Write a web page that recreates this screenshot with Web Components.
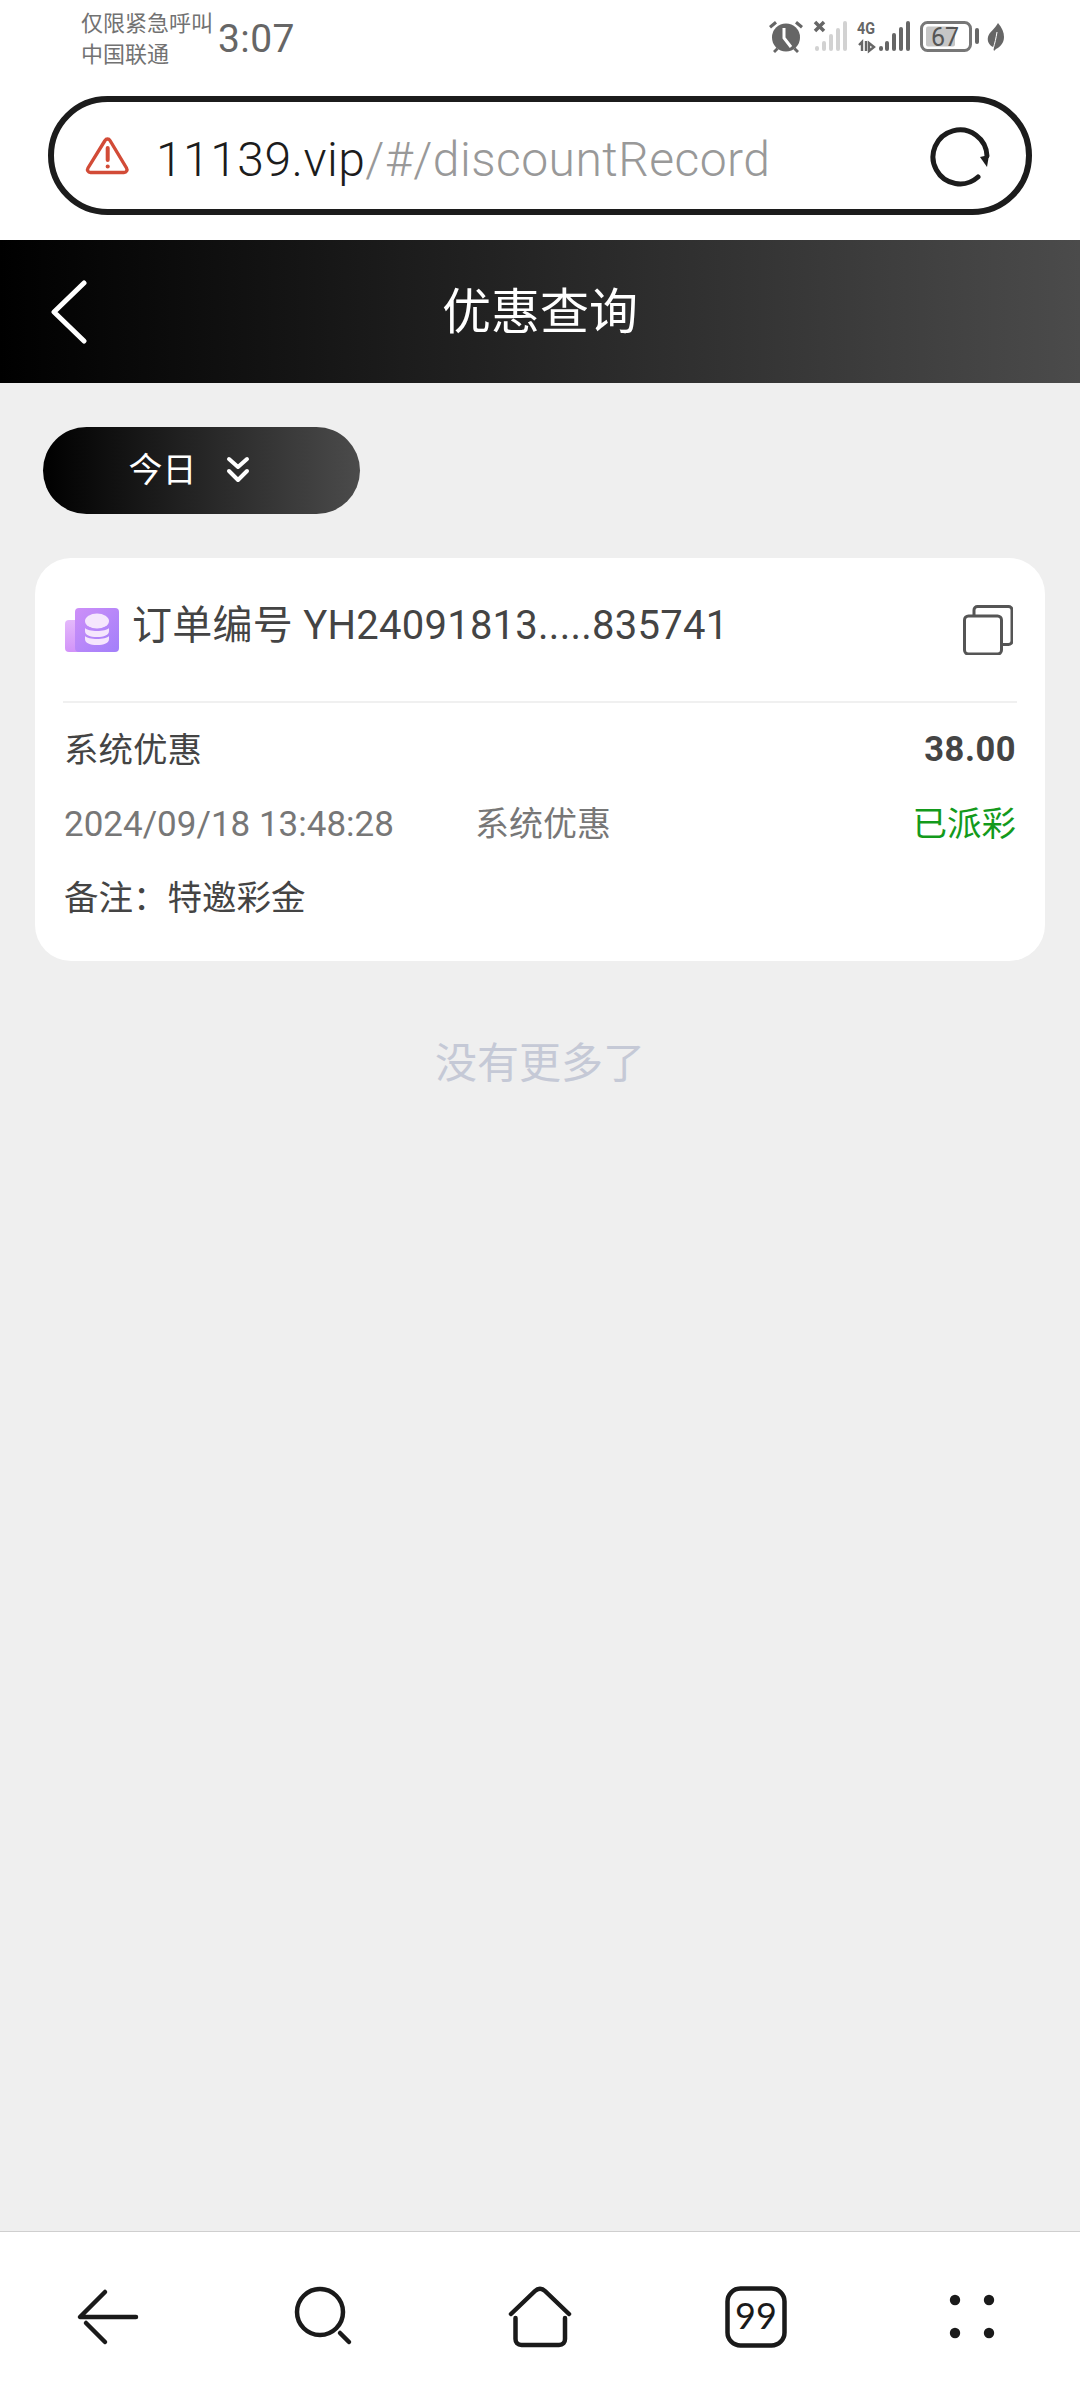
<!DOCTYPE html>
<html lang="zh-CN">
<head>
<meta charset="utf-8">
<title>优惠查询</title>
<style>
  html, body { margin: 0; padding: 0; }
  body {
    width: 1080px;
    height: 2400px;
    overflow: hidden;
    font-family: Roboto, "Noto Sans CJK SC", sans-serif;
    display: flex;
    flex-direction: column;
    background: #efefef;
  }
  main-area { flex: 1; }
</style>
</head>
<body>
<status-bar></status-bar>
<url-bar host="11139.vip" path="/#/discountRecord"></url-bar>
<page-header>优惠查询</page-header>
<main-area>
  <filter-pill>今日</filter-pill>
  <record-card order="订单编号 YH24091813.....835741" kind="系统优惠" amount="38.00"
    time="2024/09/18 13:48:28" type="系统优惠" state="已派彩" note="备注:特邀彩金"></record-card>
  <end-note>没有更多了</end-note>
</main-area>
<bottom-nav></bottom-nav>

<script>
const CJK = 'Roboto, "Noto Sans CJK SC", sans-serif';

class StatusBar extends HTMLElement {
	constructor() {
		super();
		this.attachShadow({ mode: 'open' });
		this.shadowRoot.innerHTML = `
      <style>
        :host {
          display: flex;
          align-items: center;
          height: 78px;
          padding: 0 72px 0 81px;
          background: #fff;
          color: #6b6b6b;
          font-family: ${CJK};
        }
        .carrier {
          font-size: 22px;
          line-height: 31px;
          width: 137px;
          color: #727272;
          white-space: nowrap;
        }
        .time { font-size: 39px; letter-spacing: .4px; color: #666; }
        .icons { margin-left: auto; display: flex; }
        svg { display: block; }
      </style>
      <div class="carrier">仅限紧急呼叫<br>中国联通</div>
      <div class="time">3:07</div>
      <div class="icons">
        <svg width="244" height="40" viewBox="0 0 244 40">
          <g fill="#666">
            <circle cx="22" cy="18.500" r="14"/>
            <path d="M5 7l6-5 2 2.500-6 5zM39 7l-6-5-2 2.500 6 5z"/>
            <path d="M9 32l3.500-3.500 2 2-3.500 3.500zM35 32l-3.500-3.500-2 2 3.500 3.500z"/>
          </g>
          <path d="M20 9v10l7 9" fill="none" stroke="#fff" stroke-width="3"/>
          <path d="M51 3l9 9M60 3l-9 9" stroke="#666" stroke-width="3.500"/>
          <g fill="#d2d2d2">
            <rect x="51" y="27" width="4" height="5" rx="2"/>
            <rect x="58" y="22" width="4" height="10" rx="2"/>
            <rect x="65" y="15" width="4" height="17" rx="2"/>
            <rect x="72" y="9" width="4" height="23" rx="2"/>
            <rect x="79" y="2" width="4" height="30" rx="2"/>
          </g>
          <text x="93" y="15" font-family="Roboto" font-weight="700" font-size="17" textLength="18" lengthAdjust="spacingAndGlyphs" fill="#666">4G</text>
          <path d="M98 32V23l-3 3M102 22v10M105 24v8l5-4z" fill="none" stroke="#666" stroke-width="2.400"/>
          <g fill="#666">
            <rect x="115" y="27" width="4" height="5" rx="2"/>
            <rect x="121" y="22" width="4" height="10" rx="2"/>
            <rect x="128" y="14" width="4" height="18" rx="2"/>
            <rect x="135" y="8" width="4" height="24" rx="2"/>
            <rect x="142" y="2" width="4" height="30" rx="2"/>
          </g>
          <rect x="157.500" y="3.500" width="49" height="28" rx="6" fill="#fff" stroke="#777" stroke-width="3"/>
          <rect x="162" y="7.500" width="29" height="20" rx="2" fill="#c6c6c6"/>
          <text x="181" y="27" text-anchor="middle" font-family="Roboto" font-size="25" fill="#555">67</text>
          <rect x="211" y="9" width="4" height="16" rx="2" fill="#666"/>
          <path d="M234 4c4 5 6 9 6 14 0 6-4 10-8 12l-2 2-1-4c-4-2-6-6-5-10 1-5 7-8 10-14z" fill="#666"/>
          <path d="M233 13c-1 6-2 11-4 17" fill="none" stroke="#fff" stroke-width="1"/>
        </svg>
      </div>
    `;
	}
}

class UrlBar extends HTMLElement {
	constructor() {
		super();
		this.attachShadow({ mode: 'open' });
		this.shadowRoot.innerHTML = `
      <style>
        :host {
          display: block;
          background: #fff;
          padding: 18px 48px 25px;
          font-family: ${CJK};
        }
        .box {
          box-sizing: border-box;
          height: 119px;
          border: 6px solid #1c1c1c;
          border-radius: 60px;
          display: flex;
          align-items: center;
          padding: 0 34px 0 31px;
        }
        .warn { margin-right: 25px; display: block; }
        .addr {
          font-size: 48px;
          font-weight: 300;
          letter-spacing: .47px;
          padding-top: 8px;
          color: #999;
        }
        .addr b { font-weight: 300; color: #1c1c1c; }
        .reload { margin-left: auto; display: block; }
      </style>
      <div class="box">
        <svg class="warn" width="46" height="42" viewBox="0 0 46 42" fill="none" stroke="#d24b37" stroke-width="3.400" stroke-linejoin="round">
          <path d="M20 5.500c1.200-2 3.800-2 5 0L41.500 33c1.200 2 0 4.500-2.500 4.500H5.500c-2.500 0-3.700-2.500-2.500-4.500z"/>
          <path d="M22.700 13v12" stroke-linecap="round" stroke-width="4"/>
          <circle cx="22.700" cy="31.500" r="1.400" fill="#d24b37" stroke-width="1.400"/>
        </svg>
        <div class="addr"><b>${this.getAttribute('host')}</b>${this.getAttribute('path')}</div>
        <svg class="reload" width="64" height="64" viewBox="0 0 64 64" fill="none">
          <path d="M50 53A27 27 0 1 1 59 32" stroke="#1c1c1c" stroke-width="5" stroke-linecap="round"/>
          <path d="M52 33l9-2-2 12z" fill="#1c1c1c"/>
        </svg>
      </div>
    `;
	}
}

class PageHeader extends HTMLElement {
	constructor() {
		super();
		this.attachShadow({ mode: 'open' });
		this.shadowRoot.innerHTML = `
      <style>
        :host {
          display: flex;
          align-items: center;
          justify-content: center;
          position: relative;
          box-sizing: border-box;
          height: 143px;
          padding-bottom: 8px;
          background: linear-gradient(90deg, #000 0%, #4b4b4b 100%);
          color: #fff;
          font-family: ${CJK};
          font-size: 49px;
        }
        svg { position: absolute; left: 50px; top: 40px; }
      </style>
      <svg width="38" height="64" viewBox="0 0 38 64" fill="none" stroke="#fff" stroke-width="5" stroke-linecap="round" stroke-linejoin="round">
        <path d="M34 3L4 32l30 29"/>
      </svg>
      <slot></slot>
    `;
	}
}

class FilterPill extends HTMLElement {
	constructor() {
		super();
		this.attachShadow({ mode: 'open' });
		this.shadowRoot.innerHTML = `
      <style>
        :host {
          display: flex;
          align-items: center;
          justify-content: center;
          gap: 29px;
          box-sizing: border-box;
          width: 317px;
          height: 87px;
          margin: 44px 0 0 43px;
          padding: 0 25px 6px 0;
          border-radius: 44px;
          background: linear-gradient(90deg, #000 0%, #4b4b4b 100%);
          color: #fff;
          font-family: ${CJK};
          font-size: 34px;
        }
        svg { display: block; margin-top: 5px; }
      </style>
      <slot></slot>
      <svg width="24" height="28" viewBox="0 0 24 28" fill="none" stroke="#fff" stroke-width="4" stroke-linecap="round" stroke-linejoin="round">
        <path d="M3 3l9 8 9-8M3 15l9 9 9-9"/>
      </svg>
    `;
	}
}

class RecordCard extends HTMLElement {
	constructor() {
		super();
		this.attachShadow({ mode: 'open' });
		const a = (n) => this.getAttribute(n);
		this.shadowRoot.innerHTML = `
      <style>
        :host {
          display: block;
          box-sizing: border-box;
          height: 403px;
          margin: 44px 35px 0;
          padding: 0 28px;
          border-radius: 36px;
          background: #fff;
          color: #444;
          font-family: ${CJK};
        }
        .top {
          display: flex;
          align-items: center;
          box-sizing: border-box;
          height: 145px;
          margin-bottom: 6px;
          border-bottom: 2px solid #f0f0f0;
        }
        .logo { display: block; margin: 0 12px 0 1px; }
        .order { font-size: 40px; letter-spacing: .25px; margin-top: -16px; }
        .copy { margin-left: auto; display: block; margin-right: 4px; }
        .row {
          display: flex;
          align-items: center;
          height: 74px;
          padding-left: 1px;
          font-size: 34.500px;
        }
        .row.first { height: 75px; }
        .amount { margin: 0 1px 0 auto; padding-top: 5px; font-weight: 700; letter-spacing: .5px; }
        .time { color: #777; width: 411px; padding-top: 6px; font-size: 35px; }
        .type { color: #777; font-size: 34px; }
        .state { margin: 0 1px 0 auto; color: #139a1c; }
      </style>
      <div class="top">
        <svg class="logo" width="56" height="46" viewBox="0 0 56 46">
          <defs>
            <linearGradient id="lg" x1="0" y1="0" x2="0" y2="1">
              <stop offset="0" stop-color="#e4b9fb"/><stop offset="1" stop-color="#d293f9"/>
            </linearGradient>
            <linearGradient id="fg" x1="0" y1="0" x2="1" y2="1">
              <stop offset="0" stop-color="#cd8ff8"/><stop offset="1" stop-color="#a27ffa"/>
            </linearGradient>
          </defs>
          <rect x="1" y="13" width="20" height="32" rx="4" fill="url(#lg)"/>
          <rect x="11" y="1" width="44" height="44" rx="4" fill="url(#fg)"/>
          <ellipse cx="33" cy="14" rx="12" ry="7.500" fill="#f5e6fd"/>
          <path d="M21 21c3 4 21 4 24 0v3c0 4-5 6-12 6s-12-2-12-6z" fill="#f5e6fd"/>
          <path d="M21 29c3 4 21 4 24 0v3c0 4-5 6-12 6s-12-2-12-6z" fill="#f5e6fd"/>
        </svg>
        <div class="order">${a('order')}</div>
        <svg class="copy" width="50" height="50" viewBox="0 0 50 50" fill="none" stroke="#555" stroke-width="3">
          <rect x="1.500" y="11" width="37" height="38" rx="4"/>
          <path d="M11 11V5c0-2 1.500-3.500 3.500-3.500h31c2 0 3.500 1.500 3.500 3.500v31c0 2-1.500 3.500-3.500 3.500H38.500"/>
        </svg>
      </div>
      <div class="row first"><span>${a('kind')}</span><span class="amount">${a('amount')}</span></div>
      <div class="row"><span class="time">${a('time')}</span><span class="type">${a('type')}</span><span class="state">${a('state')}</span></div>
      <div class="row"><span>${a('note').replace(':', '\uFF1A')}</span></div>
    `;
	}
}

class EndNote extends HTMLElement {
	constructor() {
		super();
		this.attachShadow({ mode: 'open' });
		this.shadowRoot.innerHTML = `
      <style>
        :host {
          display: block;
          margin-top: 74px;
          text-align: center;
          color: #c5c9d6;
          font-family: ${CJK};
          font-size: 42px;
          line-height: 58px;
        }
      </style>
      <slot></slot>
    `;
	}
}

class BottomNav extends HTMLElement {
	constructor() {
		super();
		this.attachShadow({ mode: 'open' });
		this.shadowRoot.innerHTML = `
      <style>
        :host {
          display: grid;
          grid-template-columns: repeat(5, 1fr);
          align-items: center;
          justify-items: center;
          height: 168px;
          background: #fff;
          border-top: 1px solid #cfcfcf;
          font-family: ${CJK};
        }
        svg { display: block; margin-top: 2px; }
        svg * { stroke-linecap: round; stroke-linejoin: round; }
      </style>
      <svg width="64" height="64" viewBox="0 0 64 64" fill="none" stroke="#1a1a1a" stroke-width="4.500">
        <path d="M29 7L4 32h56M10 38l19 19"/>
      </svg>
      <svg width="64" height="64" viewBox="0 0 64 64" fill="none" stroke="#1a1a1a" stroke-width="4.500">
        <circle cx="28" cy="27" r="23"/><path d="M48 48l9 9"/>
      </svg>
      <svg width="66" height="66" viewBox="0 0 66 66" fill="none" stroke="#1a1a1a" stroke-width="4.500">
        <path d="M4 30L28 7c3-3 7-3 10 0l24 23"/>
        <path d="M8.500 34v21c0 3.500 2 6 6 6H52c4 0 6-2.500 6-6V34"/>
      </svg>
      <svg width="62" height="62" viewBox="0 0 62 62">
        <rect x="2.500" y="2.500" width="57" height="57" rx="13" fill="none" stroke="#1a1a1a" stroke-width="4.500"/>
        <text x="31" y="43" text-anchor="middle" font-family="Lato, Roboto, sans-serif" font-size="36" fill="#1a1a1a">99</text>
      </svg>
      <svg width="46" height="46" viewBox="0 0 46 46" fill="#1a1a1a">
        <circle cx="6" cy="6" r="5.200"/><circle cx="40" cy="6" r="5.200"/>
        <circle cx="6" cy="39" r="5.200"/><circle cx="40" cy="39" r="5.200"/>
      </svg>
    `;
	}
}

class MainArea extends HTMLElement {
	constructor() {
		super();
		this.attachShadow({ mode: 'open' });
		this.shadowRoot.innerHTML = `
      <style>
        :host { display: block; background: #efefef; }
      </style>
      <slot></slot>
    `;
	}
}

customElements.define('status-bar', StatusBar);
customElements.define('url-bar', UrlBar);
customElements.define('page-header', PageHeader);
customElements.define('filter-pill', FilterPill);
customElements.define('record-card', RecordCard);
customElements.define('end-note', EndNote);
customElements.define('bottom-nav', BottomNav);
customElements.define('main-area', MainArea);
</script>
</body>
</html>
